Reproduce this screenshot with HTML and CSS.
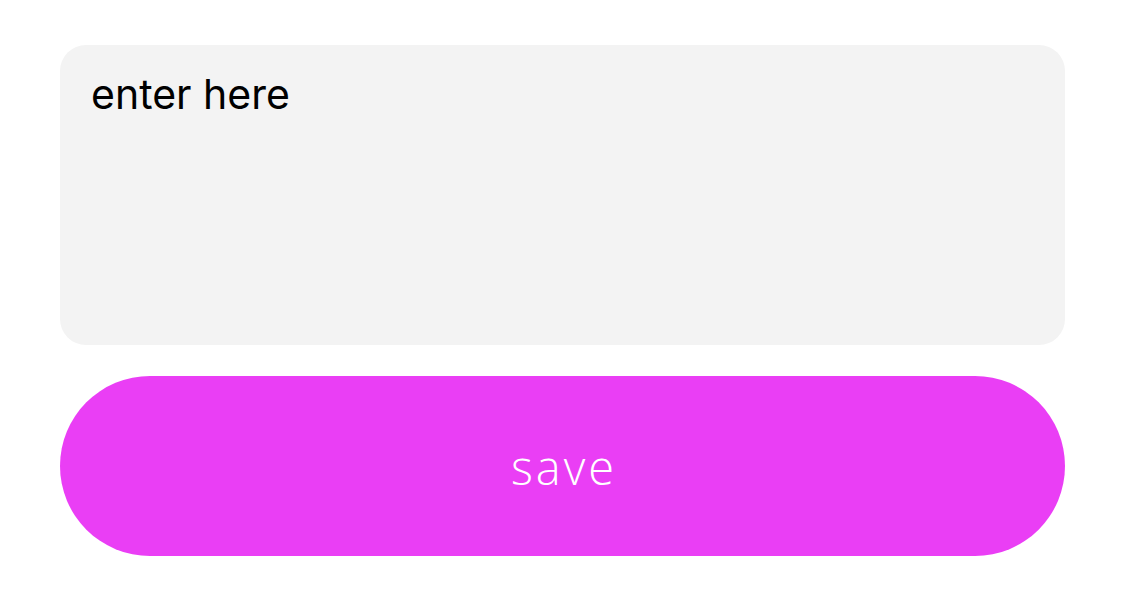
FILE: index.html
```html
<!DOCTYPE html>
<html>
<head>
<meta charset="utf-8">
<link rel="stylesheet" href="styles.css">
</head>
<body>
<div class="form">
  <div class="field"><span class="placeholder">enter here</span></div>
  <button class="save">save</button>
</div>
</body>
</html>
```
FILE: styles.css
```css
html, body {
  margin: 0;
  padding: 0;
  background: #ffffff;
}
.form {
  width: 1005px;
  margin: 45px 0 0 60px;
  display: flex;
  flex-direction: column;
  gap: 31px;
}
.field {
  height: 300px;
  box-sizing: border-box;
  background: #f3f3f3;
  border-radius: 26px;
  padding: 24px 31px;
}
.placeholder {
  font-family: Inter, "Liberation Sans", sans-serif;
  font-size: 41px;
  line-height: 50px;
  color: #000;
}
.save {
  height: 180px;
  border: none;
  border-radius: 90px;
  background: #ea3ef5;
  color: #fff;
  font-family: "Open Sans", Lato, sans-serif;
  font-weight: 300;
  font-size: 47px;
  letter-spacing: 3px;
  line-height: 1;
  padding: 2px 0 0 3px;
  cursor: pointer;
}
```
